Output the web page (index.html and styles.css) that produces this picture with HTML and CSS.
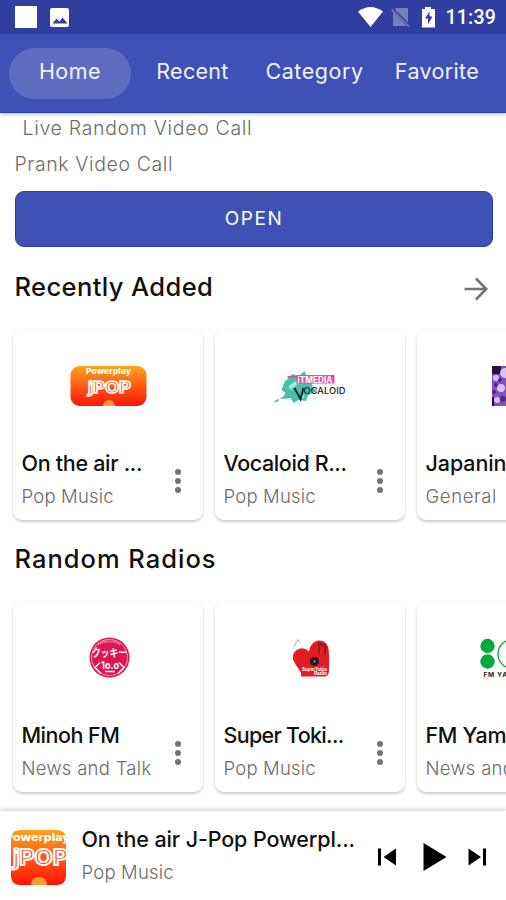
FILE: index.html
```html
<!DOCTYPE html>
<html lang="en">
<head>
<meta charset="utf-8">
<meta name="viewport" content="width=device-width">
<title>Radio</title>
<link rel="stylesheet" href="styles.css">
</head>
<body>
<div class="app">
  <div class="status">
    <svg class="status-left" width="60" height="34" viewBox="0 0 60 34"><path fill="#fff" d="M1 6h22v22H1z"/><rect x="36" y="8" width="19" height="19" rx="2" fill="#fff"/><path fill="#303f9f" d="M38.500 23.500l4-5 3 3 3-4 5 6z"/></svg>
    <svg class="status-icons" width="80" height="34" viewBox="0 0 80 34"><path fill="#fff" d="M0 11.500Q12.500 2.500 25 11.500L12.500 27z"/><path fill="#7680bd" d="M38 8h12v14.500L37 9.500zM35 12.500l14 13.500H35z"/><path stroke="#7680bd" stroke-width="1.600" d="M33.500 9.500L51 26.500"/><path fill="#fff" d="M67 7h6v2h4v18.500H64V9h3z"/><path fill="#303f9f" d="M71.500 11.500l-4.500 7h3v6l4.500-8h-3z"/></svg>
    <span class="clock">11:39</span>
  </div>
  <nav class="tabs">
    <a class="tab active t-home">Home</a>
    <a class="tab t-recent">Recent</a>
    <a class="tab t-category">Category</a>
    <a class="tab t-favorite">Favorite</a>
  </nav>
  <main class="content">
    <div class="promo promo-first">Live Random Video Call</div>
    <div class="promo promo-second">Prank Video Call</div>
    <button class="open">OPEN</button>
    <header class="heading"><h2 class="h-recent">Recently Added</h2>
      <svg width="24" height="24" viewBox="0 0 24 24" fill="none" stroke="#737373" stroke-width="2.600"><path d="M.5 12H22M12 1.500L22.300 12 12 22.500"/></svg>
    </header>
    <section class="row">
      <article class="card">
        <svg class="logo" viewBox="1 0 188 110">
          <defs><linearGradient id="flame" x2="0" y2="1"><stop offset="0" stop-color="#fca51c"/><stop offset=".5" stop-color="#ff5a12"/><stop offset="1" stop-color="#fd1607"/></linearGradient></defs>
          <rect x="57.500" y="35" width="76" height="40" rx="9" fill="url(#flame)"/>
          <text class="logo-round" x="73" y="43" font-size="7.500" textLength="45" lengthAdjust="spacingAndGlyphs" fill="#fff">Powerplay</text>
          <text class="logo-outline" x="75" y="61.500" font-size="16" textLength="43" lengthAdjust="spacingAndGlyphs">jPOP</text>
          <path fill="#ff9b32" d="M90 75a6 6 0 0 1 12 0z"/>
        </svg>
        <h3 class="n-air">On the air ...</h3><p class="g-pop">Pop Music</p>
        <svg class="dots" width="6" height="26" viewBox="0 0 6 26"><g fill="#737373"><circle cx="3" cy="4" r="3"/><circle cx="3" cy="13" r="3"/><circle cx="3" cy="22" r="3"/></g></svg>
      </article>
      <article class="card">
        <svg class="logo" viewBox="0.500 0 188 110">
          <path fill="#49bfae" d="M69 51l8-8 6 2 6-5 3 7 6 2-2 7 6 4-9 4-3 6-7-1-5 3-3-5-8 1 3-6-4-3z"/>
          <path fill="#fff" opacity=".6" d="M73 55l7-5 2 3-7 6zM83 66l5-3 1 4z"/>
          <path stroke="#49bfae" stroke-width="1.500" stroke-dasharray="5 2" d="M59 71l15-8"/>
          <path fill="#e94f9f" d="M81 44h38v8.500H81zM72 45h9v2h-9z"/>
          <text class="logo-bold" x="82" y="51.500" font-size="8.500" textLength="35" lengthAdjust="spacingAndGlyphs" fill="#fff">iTMEDIA</text>
          <path d="M79 57l6 11 3-11" fill="none" stroke="#18282b" stroke-width="2"/>
          <text class="logo-thin" x="88" y="63" font-size="9" textLength="42" lengthAdjust="spacingAndGlyphs" fill="#222">OCALOID</text>
        </svg>
        <h3 class="n-vocaloid">Vocaloid R...</h3><p class="g-pop">Pop Music</p>
        <svg class="dots" width="6" height="26" viewBox="0 0 6 26"><g fill="#737373"><circle cx="3" cy="4" r="3"/><circle cx="3" cy="13" r="3"/><circle cx="3" cy="22" r="3"/></g></svg>
      </article>
      <article class="card">
        <svg class="logo" viewBox="1 0 188 110">
          <path fill="#8054b8" d="M75 35h38v40H75z"/><path fill="#241334" d="M75 35h9v8h-9zM75 66h2v9h-2z"/>
          <g fill="#d9bdf3"><circle cx="79" cy="47" r="3"/><circle cx="88" cy="42" r="5"/><circle cx="84" cy="57" r="4"/><circle cx="80" cy="69" r="3"/></g><g fill="#542196"><circle cx="79" cy="54" r="2"/><circle cx="77" cy="61" r="2"/><circle cx="86" cy="68" r="3"/><circle cx="83" cy="49" r="2"/></g>
        </svg>
        <h3 class="n-japan">Japaninradio</h3><p class="g-general">General</p>
      </article>
    </section>
    <header class="heading"><h2 class="h-random">Random Radios</h2></header>
    <section class="row">
      <article class="card">
        <svg class="logo" viewBox="0 0.500 188 110">
          <circle cx="95.500" cy="55" r="20" fill="#df1650"/><circle cx="95.500" cy="55" r="18" fill="none" stroke="#f7a2b9" stroke-width="1"/>
          <path fill="none" stroke="#f8a8bd" stroke-dasharray="1 1" stroke-width="2" d="M84 42q11-6 23 0"/>
          <text class="logo-bold" x="78" y="54" font-size="11" textLength="35" lengthAdjust="spacingAndGlyphs" fill="#fff">クッキー</text>
          <text class="logo-bold" x="87" y="66" font-size="10.500" textLength="18" lengthAdjust="spacingAndGlyphs" fill="#fff">1o.o</text>
          <path fill="none" stroke="#fff" stroke-width="1.500" d="M86 60l-5 5 6 6M105 60l5 5-6 6M91 69h10"/>
        </svg>
        <h3 class="n-minoh">Minoh FM</h3><p class="g-news">News and Talk</p>
        <svg class="dots" width="6" height="26" viewBox="0 0 6 26"><g fill="#737373"><circle cx="3" cy="4" r="3"/><circle cx="3" cy="13" r="3"/><circle cx="3" cy="22" r="3"/></g></svg>
      </article>
      <article class="card">
        <svg class="logo" viewBox="1 1.500 188 110">
          <path fill="#e31c23" d="M86 75V71L80 62q-5-8 1-13 7-5 13 1 1-9 9-11 7-1 10 6 1 3 1 9v15q0 6-5 6z"/>
          <path stroke="#981c25" stroke-width="2" fill="none" d="M104 52V42l6 2v9"/><circle cx="99.500" cy="60" r="4.500" fill="#231b1e"/><circle cx="99.500" cy="60" r="1" fill="#aaa"/>
          <path stroke="#9ab2b0" fill="none" d="M79 45l4-7 2 3"/>
          <text class="logo-bold" x="87" y="69" font-size="5" textLength="25" lengthAdjust="spacingAndGlyphs" fill="#fff">SuperTokio</text>
          <text class="logo-bold" x="99" y="73.500" font-size="4.500" textLength="13" lengthAdjust="spacingAndGlyphs" fill="#fff">Radio</text>
        </svg>
        <h3 class="n-super">Super Toki...</h3><p class="g-pop">Pop Music</p>
        <svg class="dots" width="6" height="26" viewBox="0 0 6 26"><g fill="#737373"><circle cx="3" cy="4" r="3"/><circle cx="3" cy="13" r="3"/><circle cx="3" cy="22" r="3"/></g></svg>
      </article>
      <article class="card">
        <svg class="logo" viewBox="0.500 1 188 110">
          <g fill="#06a93f"><circle cx="70" cy="44" r="7.200"/><circle cx="70" cy="59.500" r="7.200"/></g><circle cx="95" cy="52" r="14.500" fill="none" stroke="#06a93f" stroke-width="1.300"/>
          <text class="logo-bold" x="66" y="75" font-size="6.500" fill="#222" textLength="46" lengthAdjust="spacing">FM YAMATO</text>
        </svg>
        <h3 class="n-yamato">FM Yamato</h3><p class="g-news">News and Talk</p>
      </article>
    </section>
  </main>
  <footer class="player">
    <svg class="cover" width="55" height="55" viewBox="0 0 55 55"><rect width="55" height="55" rx="8" fill="url(#flame)"/>
      <text class="logo-round" x="-6" y="11" font-size="11" textLength="65" lengthAdjust="spacingAndGlyphs" fill="#fff">Powerplay</text>
      <text class="logo-outline big" x="2" y="35" font-size="22" textLength="55" lengthAdjust="spacingAndGlyphs">jPOP</text><path fill="#ff9b32" d="M20 55a8 8 0 0 1 16 0z"/></svg>
    <div class="track"><h3 class="n-track">On the air J-Pop Powerpl...</h3><p class="g-pop">Pop Music</p></div>
    <svg class="controls" width="110" height="30" viewBox="0 0 110 30"><path d="M1 6.500h3v17H1zM19 6.500v17L6.500 15zM46.500 1L69.500 15 46.500 29zM91.500 6.500v17L104 15zM106 6.500h3v17h-3z"/></svg>
  </footer>
</div>
</body>
</html>
```
FILE: styles.css
```css
* { box-sizing: border-box; }
body { margin: 0; background: #fff; font-family: Inter, "Noto Sans", "Noto Sans CJK JP", sans-serif; }
.app { width: 506px; height: 900px; display: flex; flex-direction: column; overflow: hidden; }
h2, h3, p { margin: 0; white-space: nowrap; }
.status { flex: none; height: 34px; background: #303f9f; display: flex; align-items: center; padding-left: 14px; }
.status-icons { margin-left: 283.500px; }
.clock { margin-left: 8px; color: #fff; font: 500 19.5px/34px Roboto, sans-serif; letter-spacing: .2px; padding-top: 2px; }
.tabs { flex: none; height: 79px; background: #3f51b5; padding: 14px 9px; display: flex; border-bottom: 1px solid #2c3fae; box-shadow: 0 1px 4px rgba(0,0,0,.3); position: relative; }
.tab { width: 122px; height: 51px; border-radius: 26px; color: #f1f3ff; font-size: 21.5px; line-height: 47px; text-align: center; }
.active { background: #5f6dc0; }
.t-home { letter-spacing: .5px; }
.t-recent { letter-spacing: .3px; padding-left: 1px; }
.t-category { letter-spacing: .55px; padding-left: 1px; }
.t-favorite { letter-spacing: .35px; padding-left: 2px; }
.content { flex: 1; min-height: 0; overflow: hidden; }
.promo { color: #6c6c6c; font-size: 19.5px; font-weight: 300; white-space: nowrap; }
.promo-first { line-height: 31px; height: 32px; padding-left: 22.500px; letter-spacing: .68px; }
.promo-second { line-height: 38px; height: 37px; padding-left: 14.500px; letter-spacing: .6px; }
.open { display: block; width: 478px; height: 56px; margin: 8.500px 0 4px 14.500px; padding: 0 0 0 1px; border: 1px solid #263bad; border-radius: 9px; background: #3f51b5; color: #fff; font: 400 19px/54px Inter, sans-serif; letter-spacing: 1.500px; }
.heading { height: 72px; margin-bottom: 7px; padding: 0 18.500px 0 14.500px; display: flex; align-items: center; justify-content: space-between; }
.heading svg { margin-top: 5px; }
h2 { color: #111; font-size: 25.5px; font-weight: 500; line-height: 71px; height: 72px; }
.h-recent { letter-spacing: .4px; }
.h-random { letter-spacing: 1px; }
.row { display: grid; grid-template-columns: repeat(3, 190px); gap: 12px; padding-left: 12.500px; margin-bottom: 3px; }
.card { position: relative; height: 190px; border-radius: 9px; padding: 1px; background: #fff; box-shadow: 0 1.500px 3px rgba(0,0,0,.2); }
.logo { display: block; width: 188px; height: 110px; }
.card h3 { padding-left: 8px; line-height: 44px; }
.card p { padding-left: 8px; line-height: 22px; }
h3 { color: #111; font-size: 21.5px; font-weight: 500; }
p { color: #6c6c6c; font-size: 18.5px; font-weight: 300; }
.n-air { letter-spacing: -.3px; }
.n-vocaloid { letter-spacing: -.4px; }
.n-japan { letter-spacing: -.1px; }
.n-minoh { letter-spacing: -.5px; }
.n-super { letter-spacing: -.7px; }
.n-yamato { letter-spacing: -.3px; }
.n-track { letter-spacing: -.12px; }
.g-pop { letter-spacing: .2px; }
.g-news { letter-spacing: .28px; }
.g-general { letter-spacing: .6px; }
.dots { position: absolute; left: 162px; top: 138px; }
.player { flex: none; height: 89px; display: flex; padding-left: 11px; background: #fff; box-shadow: 0 -2px 4px rgba(0,0,0,.17); position: relative; }
.cover { margin-top: 18.500px; border-radius: 8px; overflow: hidden; }
.track { width: 296px; padding: 14px 0 0 15.500px; }
.track h3 { line-height: 28px; }
.track p { line-height: 38px; }
.controls { margin: 31px 0 0 15px; }
.logo-round { font-family: Inter, sans-serif; font-weight: 800; }
.logo-bold { font-family: Inter, "Noto Sans CJK JP", sans-serif; font-weight: 700; }
.logo-thin { font-family: Inter, sans-serif; font-weight: 500; }
.logo-outline { font-family: Inter, sans-serif; font-weight: 700; fill: #f84724; stroke: #fff; stroke-width: 1.500px; }
.big { stroke-width: 2px; }
```
